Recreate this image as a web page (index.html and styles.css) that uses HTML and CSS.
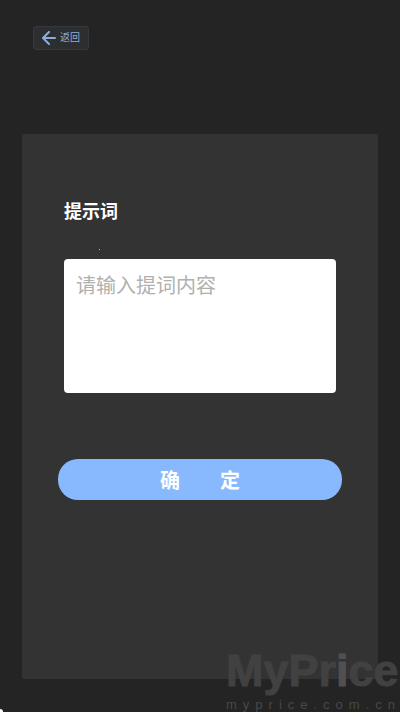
FILE: index.html
```html
<!DOCTYPE html>
<html lang="zh-CN">
<head>
    <meta charset="UTF-8">
    <meta name="viewport" content="width=device-width, initial-scale=1.0">
    <title>提示词</title>
    <link rel="stylesheet" href="styles.css">
</head>
<body>
    <header class="top-bar">
        <button type="button" class="back-button">
            <svg class="back-icon" viewBox="0 0 14 14" aria-hidden="true">
                <path d="M7 1L1 7l6 6M1 7h12" fill="none" stroke="currentColor" stroke-width="2" stroke-linecap="round" stroke-linejoin="round"/>
            </svg>
            <span>返回</span>
        </button>
    </header>
    <main class="panel">
        <form class="prompt-form">
            <label class="prompt-label" for="prompt">提示词</label>
            <textarea class="prompt-input" id="prompt" placeholder="请输入提词内容"></textarea>
            <button type="button" class="confirm-button">确&#12288;&#12288;定</button>
        </form>
    </main>
    <div class="watermark">
        <span class="watermark-name">MyPr<span class="watermark-i">i</span>ce</span>
        <span class="watermark-url">myprice.com.cn</span>
    </div>
    <span class="speck"></span>
    <span class="corner"></span>
</body>
</html>
```

FILE: styles.css
```css
* {
    box-sizing: border-box;
}
body {
    position: relative;
    display: flex;
    flex-direction: column;
    min-height: 100vh;
    margin: 0;
    padding: 26px 22px 33px;
    background-color: #242424;
    font-family: "Liberation Sans", "Noto Sans CJK SC", sans-serif;
}
.top-bar {
    display: flex;
    padding-left: 11px;
    margin-bottom: 84px;
}
.back-button {
    display: flex;
    align-items: center;
    gap: 4px;
    height: 24px;
    padding: 0 8px;
    border: 1px solid #34393f;
    border-radius: 3px;
    background-color: #2d2e30;
    color: #8caedb;
    font-family: inherit;
    font-size: 10px;
    line-height: 16px;
    cursor: pointer;
}
.back-icon {
    width: 14px;
    height: 14px;
}
.panel {
    flex: 1;
    padding: 64px 36px;
    border-radius: 2px;
    background-color: #333;
}
.prompt-form {
    display: flex;
    flex-direction: column;
}
.prompt-label {
    margin: 0 6px 33px;
    color: #fff;
    font-size: 18px;
    font-weight: bold;
    line-height: 28px;
}
.prompt-input {
    height: 134px;
    margin: 0 6px 66px;
    padding: 12px;
    border: none;
    border-radius: 4px;
    background-color: #fff;
    color: #333;
    font-family: inherit;
    font-size: 20px;
    line-height: 30px;
    resize: none;
}
.prompt-input::placeholder {
    color: #b0b0b0;
}
.confirm-button {
    height: 41px;
    border: none;
    border-radius: 20px;
    background-color: #88b9ff;
    color: #fff;
    font-family: inherit;
    font-size: 20px;
    font-weight: bold;
    cursor: pointer;
}
.watermark {
    position: absolute;
    right: 0;
    bottom: 0;
    width: 174px;
    color: #414141;
    white-space: nowrap;
    pointer-events: none;
}
.watermark-name {
    display: block;
    font-size: 45px;
    font-weight: bold;
    line-height: 54px;
    -webkit-text-stroke: 1px currentColor;
}
.watermark-i {
    color: #505050;
}
.watermark-url {
    display: block;
    color: #484848;
    font-size: 13px;
    line-height: 14px;
    letter-spacing: 6px;
}
.speck {
    position: absolute;
    top: 249px;
    left: 99px;
    width: 1px;
    height: 1px;
    background-color: #9dc4c4;
}
.corner {
    position: absolute;
    bottom: 0;
    left: 0;
    width: 3px;
    height: 3px;
    border-top-right-radius: 3px;
    background-color: #fff;
}
```
